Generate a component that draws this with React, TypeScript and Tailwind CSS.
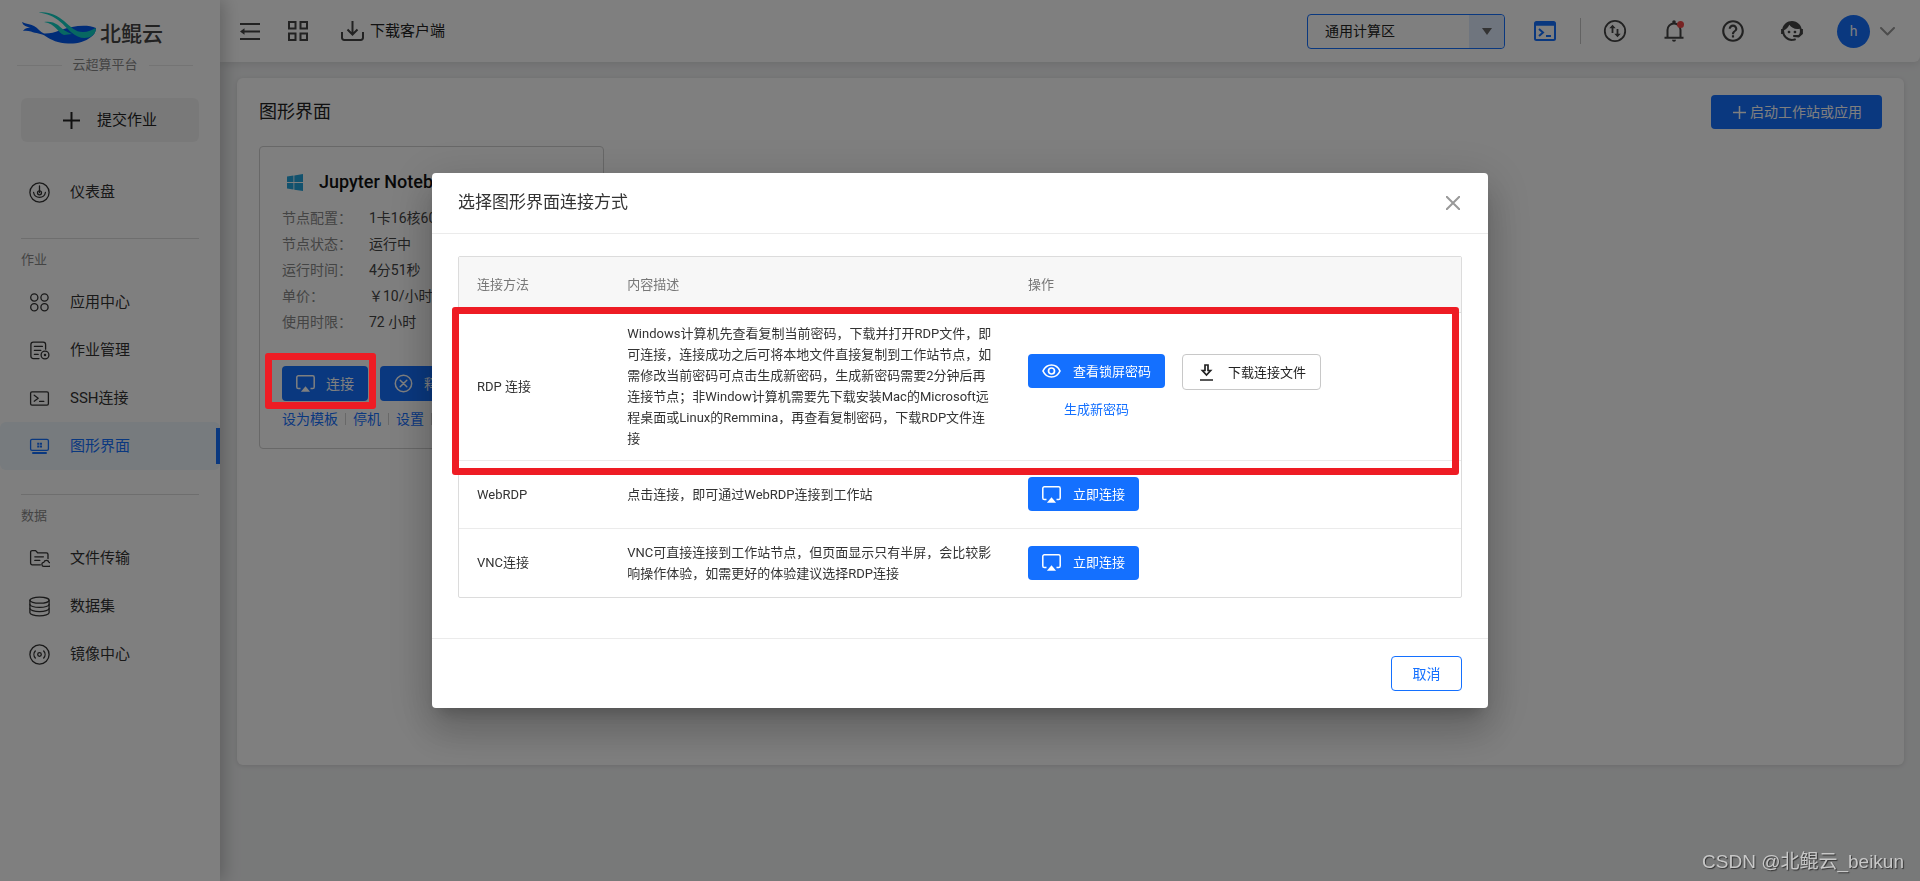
import React from 'react';
import { MdHelpOutline } from 'react-icons/md';

interface IconProps {
  className?: string;
}

interface NavItem {
  label: string;
  icon: React.FC<IconProps>;
  active?: boolean;
}

const Line: React.FC<React.SVGProps<SVGSVGElement>> = ({ children, ...rest }) => (
  <svg fill="none" stroke="currentColor" strokeWidth="1.3" strokeLinecap="round" strokeLinejoin="round" aria-hidden="true" {...rest}>
    {children}
  </svg>
);

const DashboardIcon: React.FC<IconProps> = ({ className }) => (
  <Line viewBox="0 0 21 21" className={className}>
    <circle cx="10.5" cy="10.5" r="9.6" />
    <circle cx="10.5" cy="10.8" r="2" />
    <path d="M10.5 4v6.5M4.6 10.5a6 6 0 0 0 11.8 0" />
  </Line>
);

const AppsIcon: React.FC<IconProps> = ({ className }) => (
  <Line viewBox="0 0 21 21" className={className}>
    <circle cx="5.3" cy="5.5" r="3.6" />
    <circle cx="15.5" cy="5.5" r="3.6" />
    <circle cx="5.3" cy="15.3" r="3.6" />
    <circle cx="15.5" cy="15.3" r="3.6" />
  </Line>
);

const JobsIcon: React.FC<IconProps> = ({ className }) => (
  <Line viewBox="0 0 21 21" className={className}>
    <path d="M10 18.6H4.3a2.4 2.4 0 0 1-2.4-2.4V4.6a2.4 2.4 0 0 1 2.4-2.4h9.9a2.4 2.4 0 0 1 2.4 2.4v4.6" />
    <path d="M5.4 6.4h8M5.4 10.4h6.4M5.4 14.4h3.8" />
    <circle cx="16" cy="15" r="3.9" />
    <circle cx="16" cy="15" r=".6" fill="currentColor" />
  </Line>
);

const SshIcon: React.FC<IconProps> = ({ className }) => (
  <Line viewBox="0 0 21 21" className={className}>
    <rect x="1.6" y="3.8" width="17.8" height="13.4" rx="1.4" />
    <path d="M5.2 7.2l4 3-4 3M10.6 13.4h4.2" />
  </Line>
);

const DesktopIcon: React.FC<IconProps> = ({ className }) => (
  <Line viewBox="0 0 21 21" className={className}>
    <rect x="1.6" y="3.4" width="17.8" height="11" rx="1.4" />
    <path d="M4 17h13" strokeWidth="2" />
    <path d="M8.2 6.7h2.1v2.1H8.2zM10.9 6.7H13v2.1h-2.1zM8.2 9.4h2.1v2.1H8.2zM10.9 9.4H13v2.1h-2.1z" fill="currentColor" stroke="none" />
  </Line>
);

const FilesIcon: React.FC<IconProps> = ({ className }) => (
  <Line viewBox="0 0 21 21" className={className}>
    <path d="M11.4 16.8H3.2a1.6 1.6 0 0 1-1.6-1.6V4.2a1.6 1.6 0 0 1 1.6-1.6h3.4l2 2.2h8.8a1.6 1.6 0 0 1 1.6 1.6v4.2" />
    <path d="M5.8 8.8h8.6M5.8 12.4h5" />
    <path d="M15 18.4a2 2 0 0 1-.2-4 2.7 2.7 0 0 1 5.2 0 2 2 0 0 1-.2 4z" />
  </Line>
);

const DatasetIcon: React.FC<IconProps> = ({ className }) => (
  <Line viewBox="0 0 21 21" className={className}>
    <ellipse cx="10.5" cy="4.2" rx="9.6" ry="3" />
    <path d="M.9 4.2v12.6c0 1.6 4.3 3 9.6 3s9.6-1.4 9.6-3V4.2" />
    <path d="M.9 8.4c0 1.6 4.3 3 9.6 3s9.6-1.4 9.6-3M.9 12.6c0 1.6 4.3 3 9.6 3s9.6-1.4 9.6-3" />
  </Line>
);

const ImagesIcon: React.FC<IconProps> = ({ className }) => (
  <Line viewBox="0 0 21 21" className={className}>
    <circle cx="10.5" cy="10.5" r="9.6" />
    <circle cx="10.5" cy="10.5" r="1.8" />
    <path d="M6.3 7a5.2 5.2 0 0 0 0 7M14.7 7a5.2 5.2 0 0 1 0 7" />
  </Line>
);

const AirplayIcon: React.FC<IconProps> = ({ className }) => (
  <svg viewBox="0 0 19 17" fill="none" className={className} aria-hidden="true">
    <path d="M4.5 13.6H2.4A1.6 1.6 0 0 1 .8 12V2.4A1.6 1.6 0 0 1 2.4.8h14.2a1.6 1.6 0 0 1 1.6 1.6V12a1.6 1.6 0 0 1-1.6 1.6h-2.1" stroke="currentColor" strokeWidth="1.5" />
    <path d="M9.5 11.2l4.6 5.6H4.9z" fill="currentColor" />
  </svg>
);

const PlusIcon: React.FC<IconProps> = ({ className }) => (
  <svg viewBox="0 0 17 17" stroke="currentColor" strokeWidth="2" className={className} aria-hidden="true">
    <path d="M8.5 0v17M0 8.5h17" />
  </svg>
);

const Whale = () => (
  <svg viewBox="0 0 75 32" className="w-[75px] h-8 shrink-0" aria-hidden="true">
    <path d="M1 10c4 2.500 8 1.500 12 4 4 2 6 6 10 7.500 11 .5 19-5.500 28-6.500 8-1.500 17-2 24 1 0 4-2 7-5 9-6 5-15 7-23 6.500-10-.5-17-3.500-22-7-5-3.500-10-3-15-5-3-1-6-1-8-.5 2-3 5-3.500 8-3-4-1.500-8-2-9-6z" fill="#0058f0" />
    <path d="M23 10c5-1 10 0 14 3 4 4 8 7 14 9l-8 1c-6-2-8-11-20-13z" fill="#10d0c4" />
    <path d="M17.500.500C27-1 36 3 43 9c7 6 11 11 19 11 5 0 9-2 12.500-4 1 4-2 8-7 9.500-6 1.500-12-.5-17-5C41 12 36 3 17.500.5z" fill="#10d0c4" />
  </svg>
);

const jobItems: NavItem[] = [
  { label: '应用中心', icon: AppsIcon },
  { label: '作业管理', icon: JobsIcon },
  { label: 'SSH连接', icon: SshIcon },
  { label: '图形界面', icon: DesktopIcon, active: true },
];

const dataItems: NavItem[] = [
  { label: '文件传输', icon: FilesIcon },
  { label: '数据集', icon: DatasetIcon },
  { label: '镜像中心', icon: ImagesIcon },
];

const NavLink: React.FC<{ item: NavItem }> = ({ item }) => {
  const Icon = item.icon;
  return (
    <a
      href="#"
      className={
        item.active
          ? 'relative flex items-center gap-5 h-12 pt-px pl-[29px] rounded-md bg-[#eef6fd] text-[#1470ff] text-[15px]'
          : 'relative flex items-center gap-5 h-12 pt-px pl-[29px] text-[#333] text-[15px]'
      }
    >
      <Icon className="w-[21px] h-[21px] shrink-0" />
      {item.label}
      {item.active && <span className="absolute right-0 top-1.5 w-1 h-9 bg-[#1470ff]" />}
    </a>
  );
};

const NavSection: React.FC<{ title: string; items: NavItem[] }> = ({ title, items }) => (
  <div className="mt-[22px] pb-0.5">
    <h2 className="mx-[21px] border-t border-[#dcdcdc] pt-3 pb-[9px] text-[13px] leading-[18px] text-[#888]">{title}</h2>
    {items.map(item => (
      <NavLink key={item.label} item={item} />
    ))}
  </div>
);

const Sidebar = () => (
  <aside className="relative z-10 w-[220px] shrink-0 bg-white shadow-[4px_0_16px_rgba(0,0,0,0.22)]">
    <div className="flex items-center gap-1 pt-3 pl-[21px]">
      <Whale />
      <span className="mt-3 text-[21px] leading-5 font-medium text-[#444]">北鲲云</span>
    </div>
    <div className="flex items-center gap-[11px] mt-3 ml-[17px] mr-[27px] text-[13px] leading-[18px] text-[#888]">
      <span className="flex-1 h-px bg-[#e8e8e8]" />
      云超算平台
      <span className="flex-1 h-px bg-[#e8e8e8]" />
    </div>
    <div className="mt-6 mx-[21px]">
      <button className="flex items-center justify-center gap-[17px] w-full h-11 pt-px rounded-md bg-[#f3f3f3] text-[15px] text-[#222]">
        <PlusIcon className="w-[17px] h-[17px]" />
        提交作业
      </button>
    </div>
    <nav className="mt-[26px]">
      <NavLink item={{ label: '仪表盘', icon: DashboardIcon }} />
      <NavSection title="作业" items={jobItems} />
      <NavSection title="数据" items={dataItems} />
    </nav>
  </aside>
);

const TopBar = () => (
  <header className="relative flex items-center h-[62px] pl-5 pr-[25px] rounded-br-md bg-white shadow-[0_2px_8px_rgba(0,0,0,0.1)] text-[#444]">
    <button aria-label="收起菜单">
      <svg viewBox="0 0 20 17" className="w-5 h-[17px]" stroke="currentColor" strokeWidth="2" fill="none">
        <path d="M0 1h20M4 8.5h16M0 16h20" />
        <path d="M4.5 5.2L0 8.5l4.5 3.3z" fill="currentColor" stroke="none" />
      </svg>
    </button>
    <button aria-label="应用" className="ml-7">
      <svg viewBox="0 0 20 20" className="w-5 h-5" stroke="currentColor" strokeWidth="2" fill="none">
        <path d="M1 1h6.5v6.5H1zM12.5 1H19v6.5h-6.5zM1 12.5h6.5V19H1zM12.5 12.5H19V19h-6.5z" />
      </svg>
    </button>
    <a href="#" className="flex items-center gap-1.5 ml-[33px] text-[15px] text-[#222]">
      <svg viewBox="0 0 23 20" className="w-[23px] h-5 text-[#444]" stroke="currentColor" strokeWidth="2" fill="none">
        <path d="M1 11v5.5A2.3 2.3 0 0 0 3.3 19h16.4a2.3 2.3 0 0 0 2.3-2.5V11M11.5 0v13.5M6.5 8.5l5 5 5-5" />
      </svg>
      下载客户端
    </a>
    <div className="relative ml-auto w-[198px]">
      <select aria-label="计算区" className="appearance-none w-full h-[35px] pl-[17px] rounded border border-[#1470ff] bg-white text-sm text-[#222]">
        <option>通用计算区</option>
      </select>
      <span className="pointer-events-none absolute right-px inset-y-px flex items-center justify-center w-[35px] rounded-r bg-[#dfeafd]">
        <span className="border-x-[5px] border-t-[7px] border-x-transparent border-t-[#666]" />
      </span>
    </div>
    <button aria-label="终端" className="ml-[29px] text-[#1470ff]">
      <svg viewBox="0 0 22 20" className="w-[22px] h-5" fill="none" stroke="currentColor" strokeWidth="2">
        <rect x="1" y="1" width="20" height="18" rx="1.5" />
        <path d="M1 3h20" strokeWidth="3.5" />
        <path d="M5 8l4 3.5L5 15M12 15h5" />
      </svg>
    </button>
    <span className="w-px h-[26px] ml-6 mr-[22px] bg-[#c4c4c4]" />
    <div className="flex items-center gap-[35px]">
      <button aria-label="传输">
        <svg viewBox="0 0 24 24" className="w-6 h-6" fill="none" stroke="currentColor" strokeWidth="1.8">
          <circle cx="12" cy="12" r="10.2" />
          <path d="M9.5 14V7.5M14.5 10v6.5" />
          <path d="M6.3 9.3L9.5 5.8l3.2 3.5zM11.3 14.7l3.2 3.5 3.2-3.5z" fill="currentColor" stroke="none" />
        </svg>
      </button>
      <button aria-label="通知" className="relative">
        <svg viewBox="0 0 24 24" className="w-6 h-6" fill="none" stroke="currentColor" strokeWidth="2">
          <path d="M5.5 18.5V11a6.5 6.5 0 0 1 13 0v7.5M2.500 18.800h19" />
          <path d="M10 20.800h4a2 2 0 0 1-4 0z" fill="currentColor" stroke="none" />
          <circle cx="12" cy="3" r="1.8" fill="currentColor" stroke="none" />
        </svg>
        <span className="absolute right-0.5 top-0.5 w-[7px] h-[7px] rounded-full bg-[#f04848]" />
      </button>
      <button aria-label="帮助">
        <MdHelpOutline className="w-[26px] h-[26px] -mx-px" />
      </button>
      <button aria-label="客服">
        <svg viewBox="1 1 22 22" className="w-6 h-6" fill="currentColor">
          <path d="M18.72,14.76C19.07,13.91 19.26,13 19.26,12C19.26,11.28 19.15,10.59 18.96,9.95C18.31,10.1 17.63,10.18 16.92,10.18C13.86,10.18 11.15,8.67 9.5,6.34C8.61,8.5 6.91,10.26 4.77,11.22C4.73,11.47 4.73,11.74 4.73,12A7.27,7.27 0 0,0 12,19.27C13.05,19.27 14.06,19.04 14.97,18.63C15.54,19.72 15.8,20.26 15.78,20.26C14.14,20.81 12.87,21.08 12,21.08C9.58,21.08 7.27,20.13 5.57,18.42C4.53,17.38 3.76,16.11 3.33,14.73H2V10.18H3.09C3.93,6.04 7.6,2.92 12,2.92C14.4,2.92 16.71,3.87 18.42,5.58C19.69,6.84 20.54,8.45 20.89,10.18H22V14.73H21.94L18.38,18L13.08,17.4V15.73H17.91L18.72,14.76M9.27,11.77A1.14,1.14 0 1,1 9.27,14.04A1.14,1.14 0 1,1 9.27,11.77M14.72,11.77A1.14,1.14 0 1,1 14.72,14.04A1.14,1.14 0 1,1 14.72,11.77Z" />
        </svg>
      </button>
    </div>
    <button className="flex items-center gap-2.5 ml-[33px]">
      <span className="flex items-center justify-center w-[33px] h-[33px] rounded-full bg-[#1470ff] text-sm text-white">h</span>
      <Line viewBox="0 0 15 9" className="w-[15px] h-[9px] text-[#999]" strokeWidth="2">
        <path d="M1 1l6.5 6.5L14 1" />
      </Line>
    </button>
  </header>
);

const details = [
  ['节点配置：', '1卡16核60G'],
  ['节点状态：', '运行中'],
  ['运行时间：', '4分51秒'],
  ['单价：', '￥10/小时'],
  ['使用时限：', '72 小时'],
];

const cardButton = 'flex items-center gap-[11px] h-[35px] px-3.5 rounded bg-[#1470ff] text-sm text-white';

const InstanceCard = () => (
  <article className="w-[345px] mt-[17px] pt-[23px] px-[22px] pb-[19px] rounded border border-[#d0d0d0]">
    <h3 className="flex items-center gap-4 pl-[5px] text-lg leading-6 font-medium text-[#111]">
      <svg viewBox="0 0 16 17" className="w-4 h-[17px]" fill="#25a5dc" aria-hidden="true">
        <path d="M0 2.4l6.5-.9v6.6H0zM7.3 1.4L16 0v8.1H7.3zM0 8.9h6.5v6.6L0 14.6zM7.3 8.9H16V17l-8.7-1.3z" />
      </svg>
      Jupyter Notebook
    </h3>
    <dl className="mt-[11px] text-sm leading-[26px]">
      {details.map(([name, value]) => (
        <div key={name} className="flex">
          <dt className="w-[87px] text-[#888]">{name}</dt>
          <dd className="text-[#444]">{value}</dd>
        </div>
      ))}
    </dl>
    <div className="flex gap-3 mt-[31px]">
      <div className="relative">
        <button className={cardButton}>
          <AirplayIcon className="w-[19px] h-[17px]" />
          连接
        </button>
        <span className="pointer-events-none absolute z-50 -left-[17px] -top-[13px] -right-2 -bottom-2 rounded-[3px] border-[7px] border-[#ee1c24]" />
      </div>
      <button className={cardButton}>
        <Line viewBox="0 0 19 19" className="w-[19px] h-[19px]" strokeWidth="1.5">
          <circle cx="9.5" cy="9.5" r="8.2" />
          <path d="M6.2 6.2l6.6 6.6M12.8 6.2l-6.6 6.6" />
        </Line>
        释放
      </button>
    </div>
    <div className="flex items-center gap-[7px] mt-2 text-sm leading-5 text-[#1470ff]">
      <a href="#">设为模板</a>
      <span className="w-px h-3 bg-[#d0d0d0]" />
      <a href="#">停机</a>
      <span className="w-px h-3 bg-[#d0d0d0]" />
      <a href="#">设置</a>
      <span className="w-px h-3 bg-[#d0d0d0]" />
    </div>
  </article>
);

const primaryButton = 'flex items-center gap-3 h-[34px] px-3.5 rounded bg-[#1470ff] text-[13px] text-white';

const ConnectNow = () => (
  <button className={primaryButton}>
    <AirplayIcon className="w-[19px] h-[17px]" />
    立即连接
  </button>
);

const RdpActions = () => (
  <div className="flex items-start gap-[17px]">
    <div className="flex flex-col items-center gap-3.5">
      <button className={primaryButton}>
        <svg viewBox="0 0 19 14" className="w-[19px] h-3.5" fill="none" stroke="currentColor" strokeWidth="1.7" aria-hidden="true">
          <path d="M1 7c1.7-3.7 4.8-6 8.5-6S16.3 3.3 18 7c-1.7 3.7-4.8 6-8.5 6S2.7 10.7 1 7z" />
          <circle cx="9.5" cy="7" r="3" />
        </svg>
        查看锁屏密码
      </button>
      <a href="#" className="text-[13px] leading-4 text-[#1470ff]">生成新密码</a>
    </div>
    <button className="flex items-center gap-3 h-9 px-3.5 rounded border border-[#c8c8c8] text-[13px] text-[#222]">
      <svg viewBox="0 0 19 17" className="w-[19px] h-[17px]" fill="none" stroke="currentColor" strokeWidth="1.7" aria-hidden="true">
        <path d="M3 16h13M8 1h3v5.500h2.600L9.500 11 5.400 6.500H8z" />
      </svg>
      下载连接文件
    </button>
  </div>
);

const methods = [
  {
    name: 'RDP 连接',
    desc: 'Windows计算机先查看复制当前密码，下载并打开RDP文件，即可连接，连接成功之后可将本地文件直接复制到工作站节点，如需修改当前密码可点击生成新密码，生成新密码需要2分钟后再连接节点；非Window计算机需要先下载安装Mac的Microsoft远程桌面或Linux的Remmina，再查看复制密码，下载RDP文件连接',
    action: <RdpActions />,
    row: 'h-[148px] border-b border-[#ebebeb]',
  },
  { name: 'WebRDP', desc: '点击连接，即可通过WebRDP连接到工作站', action: <ConnectNow />, row: 'h-[68px] border-b border-[#ebebeb]' },
  { name: 'VNC连接', desc: 'VNC可直接连接到工作站节点，但页面显示只有半屏，会比较影响操作体验，如需更好的体验建议选择RDP连接', action: <ConnectNow />, row: 'h-[69px]' },
];

const ConnectDialog = () => (
  <div className="fixed inset-0 z-40 flex items-center justify-center bg-black/50">
    <div role="dialog" aria-labelledby="dialog-title" className="w-[55%] rounded bg-white shadow-[0_11px_15px_-7px_rgba(0,0,0,0.2),0_24px_38px_3px_rgba(0,0,0,0.14),0_9px_46px_8px_rgba(0,0,0,0.12)]">
      <div className="flex items-center justify-between h-[61px] pl-[26px] pr-7 border-b border-[#ebebeb]">
        <h2 id="dialog-title" className="text-[17px] text-[#333]">选择图形界面连接方式</h2>
        <button aria-label="关闭" className="text-[#999]">
          <svg viewBox="0 0 14 14" className="w-3.5 h-3.5" stroke="currentColor" strokeWidth="2">
            <path d="M0 0l14 14M14 0L0 14" />
          </svg>
        </button>
      </div>
      <div className="px-[26px] pt-[22px] pb-10">
        <div className="relative rounded-xs border border-[#dcdcdc]">
          <table className="w-full table-fixed border-collapse text-left text-[13px] leading-[21px] text-[#333]">
            <thead>
              <tr className="h-[55px] border-b border-[#dcdcdc] bg-[#f7f7f7] text-[#777]">
                <th className="w-[15%] pl-[18px] font-normal">连接方法</th>
                <th className="w-[40%] pl-[18px] font-normal">内容描述</th>
                <th className="pl-[18px] font-normal">操作</th>
              </tr>
            </thead>
            <tbody>
              {methods.map(method => (
                <tr key={method.name} className={method.row}>
                  <td className="pl-[18px]">{method.name}</td>
                  <td className="pl-[18px] pr-4">{method.desc}</td>
                  <td className="pl-[18px]">{method.action}</td>
                </tr>
              ))}
            </tbody>
          </table>
          <span className="pointer-events-none absolute -left-[7px] right-0.5 top-[50px] h-[168px] rounded-[3px] border-[7px] border-[#ee1c24]" />
        </div>
      </div>
      <div className="flex justify-end py-[17px] px-[26px] border-t border-[#ebebeb]">
        <button className="w-[71px] h-[35px] rounded border border-[#1470ff] text-sm text-[#1470ff]">取消</button>
      </div>
    </div>
  </div>
);

export default function App() {
  return (
    <div className="flex min-h-screen bg-[#f1f2f3] font-[Roboto,'Noto_Sans_CJK_SC',sans-serif]">
      <Sidebar />
      <div className="flex-1 min-w-0">
        <TopBar />
        <main className="pt-4 pr-4 pl-[17px]">
          <section className="min-h-[687px] pt-[17px] px-[22px] rounded-md bg-white shadow-[0_1px_5px_rgba(0,0,0,0.12)]">
            <div className="flex items-center justify-between">
              <h1 className="text-lg text-[#222]">图形界面</h1>
              <button className="flex items-center gap-1 h-[34px] pl-[22px] pr-5 rounded bg-[#1470ff] text-sm text-white">
                <svg viewBox="0 0 13 13" className="w-[13px] h-[13px]" stroke="currentColor" strokeWidth="1.5" aria-hidden="true">
                  <path d="M6.5 0v13M0 6.5h13" />
                </svg>
                启动工作站或应用
              </button>
            </div>
            <InstanceCard />
          </section>
        </main>
      </div>
      <ConnectDialog />
      <p className="fixed z-50 right-4 bottom-1.5 font-['Liberation_Sans','Noto_Sans_CJK_SC',sans-serif] text-[19px] leading-[26px] text-[#c8c8c8] [text-shadow:1px_1px_1px_#333]">
        CSDN @北鲲云_beikun
      </p>
    </div>
  );
}
